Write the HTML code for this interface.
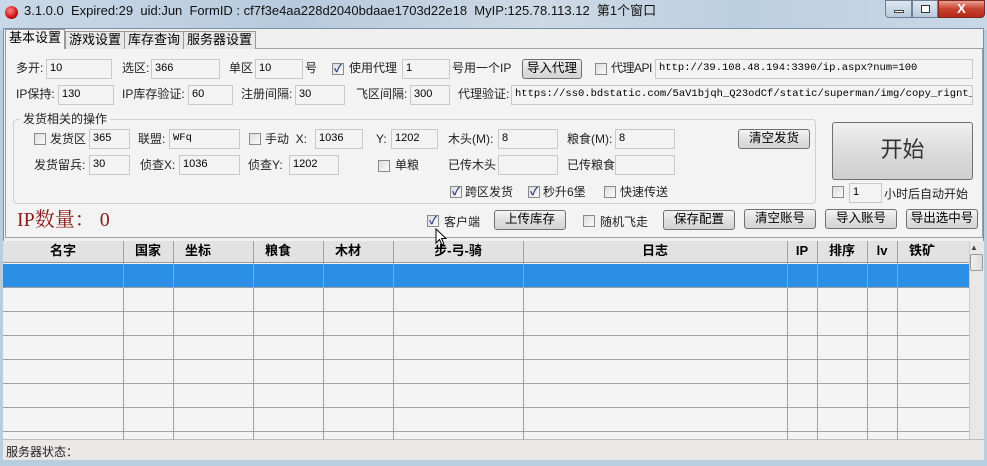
<!DOCTYPE html>
<html><head><meta charset="utf-8">
<style>
*{box-sizing:border-box;margin:0;padding:0}
body{width:987px;height:466px;overflow:hidden;position:relative;background:#b7cde0;font-family:"Liberation Sans","Noto Sans CJK SC",sans-serif;font-size:12px;color:#000;line-height:14px}
.a{position:absolute;white-space:nowrap}
.title{left:0;top:0;width:987px;height:30px;background:linear-gradient(90deg,#c8d8e8,#b7cadd 30%,#cdd9e4 55%,#bccfe1 75%,#c9d8e6);}
.ttxt{left:24px;top:3px;font-size:13px;color:#111;line-height:16px}
.win{left:3px;top:28px;width:981px;height:432px;background:#f0f0f0;border:1px solid #7a8ea4}
.tab{top:31px;height:18px;border:1px solid #999;border-bottom:none;background:#e8e8e8;font-size:13px;padding:0 3px;line-height:16px}
.panel{left:5px;top:48px;width:978px;height:190px;border:1px solid #a0a0a0;background:#f2f3f2}
.inp{height:20px;border:1px solid #c8c8c8;background:#f3f3f3;font-size:11px;padding:0 3px;line-height:16px}
.mono{font-family:"Liberation Mono",monospace;font-size:10.5px}
.lbl{font-size:12px;color:#222;line-height:14px;margin-top:0}
.cb{width:12px;height:12px;border:1px solid #8a8a8a;background:linear-gradient(135deg,#ddd,#fafafa)}
.cb.on::after{content:"✓";position:absolute;left:1px;top:-2px;font-size:11px;color:#2a3c8c;font-weight:bold;line-height:14px}
.btn{height:20px;border:1px solid #707070;border-radius:3px;background:linear-gradient(#f4f4f4,#e0e0e0 50%,#d4d4d4);text-align:center;font-size:12.5px;line-height:16px}
.grp{left:13px;top:119px;width:803px;height:85px;border:1px solid #d0d0d0;border-radius:4px}
.grid{left:3px;top:241px;width:966px;height:198px;background:#f3f4f3;overflow:hidden}
.hdr{left:0;top:0;width:966px;height:22px;background:#e2e2e2;border-bottom:1px solid #999}
.vl{top:0;width:1px;height:198px;background:#a0a0a0}
.hl{left:0;width:966px;height:1px;background:#a0a0a0}
.h{top:2px;font-weight:bold;font-size:13px;text-align:center;line-height:16px}
</style></head><body>
<div class="a title"></div>
<div class="a" style="left:5px;top:6px;width:13px;height:13px;border-radius:50%;background:radial-gradient(circle at 40% 35%,#f88,#c11 60%,#800)"></div>
<div class="a ttxt">3.1.0.0&nbsp; Expired:29&nbsp; uid:Jun&nbsp; FormID : cf7f3e4aa228d2040bdaae1703d22e18&nbsp; MyIP:125.78.113.12&nbsp; 第1个窗口</div>
<div class="a" style="left:885px;top:0;width:27px;height:18px;border:1px solid #6d7f95;border-radius:0 0 0 4px;background:linear-gradient(#dde7f1,#b9c9da)"><div class="a" style="left:8px;top:9px;width:10px;height:3px;background:#fff;border:1px solid #444"></div></div>
<div class="a" style="left:912px;top:0;width:26px;height:18px;border:1px solid #6d7f95;background:linear-gradient(#dde7f1,#b9c9da)"><div class="a" style="left:8px;top:4px;width:9px;height:8px;border:1px solid #333;background:#fff"></div></div>
<div class="a" style="left:938px;top:0;width:47px;height:18px;border:1px solid #7b2a22;border-radius:0 0 4px 0;background:linear-gradient(#e8a090,#c8412f 50%,#b52a1a);color:#fff;font-weight:bold;text-align:center;font-size:13px;line-height:16px">X</div>
<div class="a win"></div>
<div class="a panel"></div>
<div class="a tab" style="left:5px;top:29px;height:20px;background:#f2f3f2;z-index:2">基本设置</div>
<div class="a tab" style="left:65px">游戏设置</div>
<div class="a tab" style="left:124px">库存查询</div>
<div class="a tab" style="left:183px">服务器设置</div>

<div class="a lbl" style="left:16px;top:61px">多开:</div><div class="a inp" style="left:46px;top:59px;width:66px">10</div>
<div class="a lbl" style="left:122px;top:61px">选区:</div><div class="a inp" style="left:151px;top:59px;width:69px">366</div>
<div class="a lbl" style="left:229px;top:61px">单区</div><div class="a inp" style="left:255px;top:59px;width:48px">10</div>
<div class="a lbl" style="left:305px;top:61px">号</div>
<div class="a cb on" style="left:332px;top:63px"></div><div class="a lbl" style="left:349px;top:61px">使用代理</div>
<div class="a inp" style="left:402px;top:59px;width:48px">1</div>
<div class="a lbl" style="left:452px;top:61px">号用一个IP</div>
<div class="a btn" style="left:522px;top:59px;width:60px">导入代理</div>
<div class="a cb" style="left:595px;top:63px"></div><div class="a lbl" style="left:611px;top:61px;letter-spacing:-0.5px">代理API</div>
<div class="a inp mono" style="left:655px;top:59px;width:318px">http://39.108.48.194:3390/ip.aspx?num=100</div>

<div class="a lbl" style="left:16px;top:87px">IP保持:</div><div class="a inp" style="left:58px;top:85px;width:56px">130</div>
<div class="a lbl" style="left:122px;top:87px">IP库存验证:</div><div class="a inp" style="left:188px;top:85px;width:45px">60</div>
<div class="a lbl" style="left:241px;top:87px">注册间隔:</div><div class="a inp" style="left:295px;top:85px;width:50px">30</div>
<div class="a lbl" style="left:356px;top:87px">飞区间隔:</div><div class="a inp" style="left:410px;top:85px;width:40px">300</div>
<div class="a lbl" style="left:458px;top:87px">代理验证:</div>
<div class="a inp mono" style="left:511px;top:85px;width:462px;overflow:hidden">https://ss0.bdstatic.com/5aV1bjqh_Q23odCf/static/superman/img/copy_rignt_24.j</div>

<div class="a grp"></div>
<div class="a lbl" style="left:20px;top:112px;background:#f2f3f2;padding:0 3px">发货相关的操作</div>
<div class="a cb" style="left:34px;top:133px"></div><div class="a lbl" style="left:50px;top:132px">发货区</div><div class="a inp" style="left:89px;top:129px;width:41px">365</div>
<div class="a lbl" style="left:138px;top:132px">联盟:</div><div class="a inp mono" style="left:169px;top:129px;width:71px">WFq</div>
<div class="a cb" style="left:249px;top:133px"></div><div class="a lbl" style="left:265px;top:132px">手动&nbsp; X:</div><div class="a inp" style="left:315px;top:129px;width:48px">1036</div>
<div class="a lbl" style="left:376px;top:132px">Y:</div><div class="a inp" style="left:391px;top:129px;width:47px">1202</div>
<div class="a lbl" style="left:448px;top:132px">木头(M):</div><div class="a inp" style="left:498px;top:129px;width:60px">8</div>
<div class="a lbl" style="left:567px;top:132px">粮食(M):</div><div class="a inp" style="left:615px;top:129px;width:60px">8</div>
<div class="a btn" style="left:738px;top:129px;width:72px">清空发货</div>

<div class="a lbl" style="left:34px;top:158px">发货留兵:</div><div class="a inp" style="left:89px;top:155px;width:41px">30</div>
<div class="a lbl" style="left:140px;top:158px">侦查X:</div><div class="a inp" style="left:179px;top:155px;width:61px">1036</div>
<div class="a lbl" style="left:248px;top:158px">侦查Y:</div><div class="a inp" style="left:289px;top:155px;width:50px">1202</div>
<div class="a cb" style="left:378px;top:160px"></div><div class="a lbl" style="left:395px;top:158px">单粮</div>
<div class="a lbl" style="left:448px;top:158px">已传木头</div><div class="a inp" style="left:498px;top:155px;width:60px"></div>
<div class="a lbl" style="left:567px;top:158px">已传粮食</div><div class="a inp" style="left:615px;top:155px;width:60px"></div>

<div class="a cb on" style="left:450px;top:186px"></div><div class="a lbl" style="left:465px;top:185px">跨区发货</div>
<div class="a cb on" style="left:528px;top:186px"></div><div class="a lbl" style="left:543px;top:185px">秒升6堡</div>
<div class="a cb" style="left:604px;top:186px"></div><div class="a lbl" style="left:620px;top:185px">快速传送</div>

<div class="a btn" style="left:832px;top:122px;width:141px;height:58px;font-size:22px;line-height:54px;color:#333;background:linear-gradient(#f0f0f0,#dcdcdc 50%,#cfcfcf)">开始</div>
<div class="a cb" style="left:832px;top:186px"></div><div class="a inp" style="left:849px;top:183px;width:33px">1</div>
<div class="a lbl" style="left:884px;top:187px">小时后自动开始</div>

<div class="a" style="left:17px;top:208px;font-family:'Liberation Serif','Noto Serif CJK SC',serif;font-size:20px;line-height:24px;color:#8b1a1a">IP数量： 0</div>
<div class="a cb on" style="left:427px;top:215px"></div><div class="a lbl" style="left:444px;top:215px">客户端</div>
<div class="a btn" style="left:494px;top:210px;width:72px">上传库存</div>
<div class="a cb" style="left:583px;top:215px"></div><div class="a lbl" style="left:600px;top:215px">随机飞走</div>
<div class="a btn" style="left:663px;top:210px;width:72px">保存配置</div>
<div class="a btn" style="left:744px;top:209px;width:72px">清空账号</div>
<div class="a btn" style="left:825px;top:209px;width:72px">导入账号</div>
<div class="a btn" style="left:906px;top:209px;width:72px">导出选中号</div>

<div class="a grid">
<div class="a hdr"></div>
<div class="a" style="left:0;top:23px;width:966px;height:23px;background:#2c8fe6"></div>
<div class="a hl" style="top:46px"></div><div class="a hl" style="top:70px"></div><div class="a hl" style="top:94px"></div><div class="a hl" style="top:118px"></div><div class="a hl" style="top:142px"></div><div class="a hl" style="top:166px"></div><div class="a hl" style="top:190px"></div>
<div class="a vl" style="left:120px"></div><div class="a vl" style="left:170px"></div><div class="a vl" style="left:250px"></div><div class="a vl" style="left:320px"></div><div class="a vl" style="left:390px"></div><div class="a vl" style="left:520px"></div><div class="a vl" style="left:784px"></div><div class="a vl" style="left:814px"></div><div class="a vl" style="left:864px"></div><div class="a vl" style="left:894px"></div>
<div class="a h" style="left:0;width:120px">名字</div>
<div class="a h" style="left:120px;width:50px">国家</div>
<div class="a h" style="left:170px;width:50px">坐标</div>
<div class="a h" style="left:250px;width:50px">粮食</div>
<div class="a h" style="left:320px;width:50px">木材</div>
<div class="a h" style="left:390px;width:130px">步-弓-骑</div>
<div class="a h" style="left:520px;width:264px">日志</div>
<div class="a h" style="left:784px;width:30px">IP</div>
<div class="a h" style="left:814px;width:50px">排序</div>
<div class="a h" style="left:864px;width:30px">lv</div>
<div class="a h" style="left:894px;width:50px">铁矿</div>
</div>
<div class="a" style="left:969px;top:241px;width:15px;height:198px;background:#e8e8e8;border-left:1px solid #ccc"></div>
<div class="a" style="left:970px;top:243px;font-size:8px;color:#444;line-height:10px">▲</div>
<div class="a" style="left:970px;top:254px;width:13px;height:17px;border:1px solid #999;border-radius:2px;background:linear-gradient(90deg,#eee,#ddd)"></div>
<div class="a" style="left:3px;top:439px;width:981px;height:21px;background:#ebe8e8;border-top:1px solid #bbb"></div>
<div class="a lbl" style="left:6px;top:445px">服务器状态：</div>
<div class="a" style="left:0;top:460px;width:987px;height:6px;background:#b7cde0"></div>
<svg class="a" style="left:435px;top:228px" width="14" height="20" viewBox="0 0 14 20"><path d="M1 1 L1 15 L4.5 11.5 L7 17 L9 16 L6.5 10.5 L11 10.5 Z" fill="#fff" stroke="#000" stroke-width="1"/></svg>
</body></html>
